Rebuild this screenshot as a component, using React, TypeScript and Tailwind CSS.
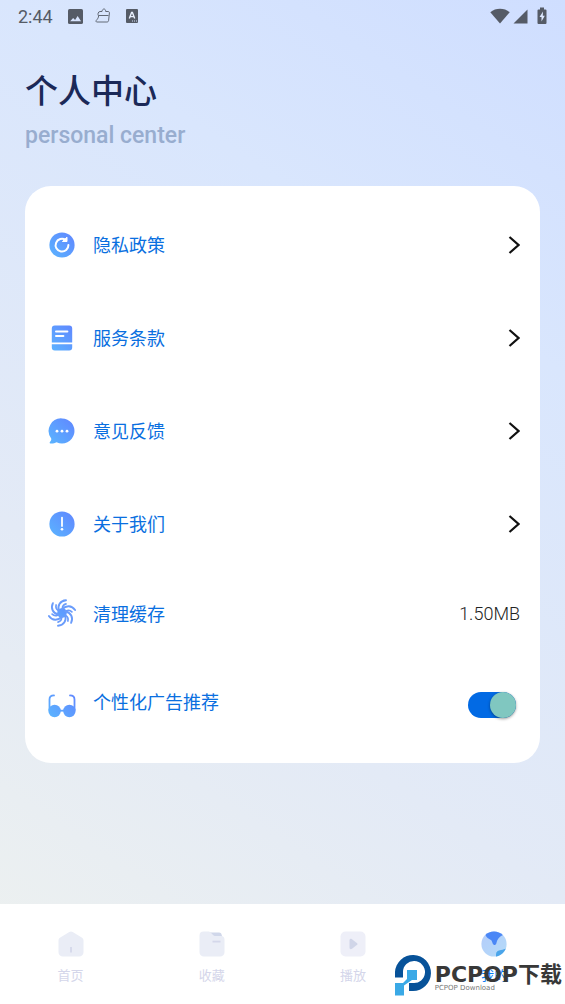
import React, { useState } from "react";

const menuItems = [
  { id: "privacy", name: "隐私政策", icon: <RefreshIcon /> },
  { id: "terms", name: "服务条款", icon: <BookIcon /> },
  { id: "feedback", name: "意见反馈", icon: <ChatIcon /> },
  { id: "about", name: "关于我们", icon: <InfoIcon /> },
];

const tabs = [
  { id: "home", name: "首页", icon: <HomeIcon /> },
  { id: "favorites", name: "收藏", icon: <FolderIcon /> },
  { id: "play", name: "播放", icon: <PlayIcon /> },
  { id: "mine", name: "我的", icon: <GlobeIcon /> },
];

function BlueGradient({ id }: { id: string }) {
  return (
    <defs>
      <linearGradient id={id} x1="0" y1="28" x2="28" y2="0" gradientUnits="userSpaceOnUse">
        <stop offset="0.1" stopColor="#5bb2ff" />
        <stop offset="0.9" stopColor="#6088ff" />
      </linearGradient>
    </defs>
  );
}

function RefreshIcon() {
  return (
    <svg className="size-7" viewBox="0 0 28 28" fill="none" aria-hidden="true">
      <BlueGradient id="refresh" />
      <circle cx="14" cy="14" r="12.6" fill="url(#refresh)" />
      <path d="M17.6 8.9A6.4 6.4 0 1 0 20.4 14" stroke="#fff" strokeWidth="2" strokeLinecap="round" />
      <path d="M19 6.2v4.3h-4.6Z" fill="#fff" stroke="#fff" strokeWidth="1" strokeLinejoin="round" />
    </svg>
  );
}

function BookIcon() {
  return (
    <svg className="size-7" viewBox="0 0 28 28" fill="none" aria-hidden="true">
      <BlueGradient id="book" />
      <path d="M6.8 1.5h14.4a3 3 0 0 1 3 3v14H3.8v-14a3 3 0 0 1 3-3Z" fill="url(#book)" />
      <path d="M3.8 20.3h20.4v3.2a3 3 0 0 1-3 3H6.8a3 3 0 0 1-3-3Z" fill="url(#book)" />
      <path d="M8 7.4h11.4M8 12h7.4" stroke="#fff" strokeWidth="2" strokeLinecap="round" />
    </svg>
  );
}

function ChatIcon() {
  return (
    <svg className="size-7" viewBox="0 0 28 28" aria-hidden="true">
      <BlueGradient id="chat" />
      <path
        d="M14 1.4A12.5 12.5 0 1 1 8.6 25.2c-1.8 1-4.2 1.4-6.2 1.2-.9-.1-1-1-.3-1.6 1-.9 1.4-2 1.1-3.4A12.5 12.5 0 0 1 14 1.4Z"
        fill="url(#chat)"
      />
      <g fill="#fff">
        <circle cx="9" cy="14.2" r="1.4" />
        <circle cx="14" cy="14.2" r="1.4" />
        <circle cx="19" cy="14.2" r="1.4" />
      </g>
    </svg>
  );
}

function InfoIcon() {
  return (
    <svg className="size-7" viewBox="0 0 28 28" aria-hidden="true">
      <BlueGradient id="info" />
      <circle cx="14" cy="14" r="12.6" fill="url(#info)" />
      <path d="M14 7.6V16" stroke="#fff" strokeWidth="1.8" strokeLinecap="round" />
      <circle cx="14" cy="19.3" r="1.3" fill="#fff" />
    </svg>
  );
}

function SwirlIcon() {
  const arms = [0, 60, 120, 180, 240, 300];
  return (
    <svg className="size-7" viewBox="0 0 28 28" fill="none" aria-hidden="true">
      <BlueGradient id="swirl" />
      <circle cx="14" cy="14" r="4.8" fill="url(#swirl)" />
      <g stroke="#6a9cfb" strokeLinecap="round">
        {arms.map((angle) => (
          <g key={angle} transform={`rotate(${angle} 14 14)`}>
            <path d="M10.8 12C9.3 6.600 12 1.600 18 1.200" strokeWidth="1.900" />
            <path d="M14.400 9.500C14.400 7.300 15.600 5.600 18 4.900" strokeWidth="1.700" />
          </g>
        ))}
      </g>
    </svg>
  );
}

function GlassesIcon() {
  return (
    <svg className="size-7" viewBox="0 0 28 28" fill="none" aria-hidden="true">
      <BlueGradient id="glasses" />
      <g fill="url(#glasses)">
        <circle cx="6.6" cy="20" r="6.2" />
        <circle cx="21.4" cy="20" r="6.2" />
        <rect x="11" y="18.8" width="6" height="1.8" />
      </g>
      <path
        d="M1.5 19V8.6C1.5 5.8 3 4.4 6 4.4M26.5 19V8.6c0-2.8-1.5-4.2-4.5-4.2"
        stroke="url(#glasses)"
        strokeWidth="1.8"
        strokeLinecap="round"
      />
    </svg>
  );
}

function HomeIcon() {
  return (
    <svg className="size-7" viewBox="0 0 28 28" aria-hidden="true">
      <path
        d="M12.3 2c1-.7 2.4-.7 3.4 0l9 5.6c1.1.7 1.8 1.8 1.8 3v11.6a4.3 4.3 0 0 1-4.3 4.3H5.8a4.3 4.3 0 0 1-4.3-4.3V10.6c0-1.2.7-2.3 1.8-3Z"
        fill="#eaedf6"
      />
      <path d="M14 17v5.5" stroke="#d4d7ea" strokeWidth="1.8" />
    </svg>
  );
}

function FolderIcon() {
  return (
    <svg className="size-7" viewBox="0 0 28 28" aria-hidden="true">
      <path d="M11 2.5h10c1.800 0 2.600 1 3 3.500l.5 2-8-1Z" fill="#d0d7ea" />
      <path
        d="M5.5 1.5H10c1.600 0 2.400.5 3.400 1.700l1.700 1.900c.7.7 1.300 1 2.400 1H23a3.500 3.500 0 0 1 3.500 3.500v12.600a4.300 4.300 0 0 1-4.300 4.300H5.800a4.300 4.300 0 0 1-4.300-4.300V5.500a4 4 0 0 1 4-4Z"
        fill="#eaedf6"
      />
      <path d="M14.5 11.600h8" stroke="#d4d7ea" strokeWidth="1.8" />
    </svg>
  );
}

function PlayIcon() {
  return (
    <svg className="size-7" viewBox="0 0 28 28" aria-hidden="true">
      <rect x="1.5" y="1.5" width="25" height="25" rx="5" fill="#eeeff8" />
      <path d="M10.5 10.5c0-1.600 1.200-2.200 2.500-1.300l4.800 3.700c.9.700.9 1.500 0 2.200L13 18.800c-1.300.9-2.500.3-2.500-1.300Z" fill="#d0d5e8" />
    </svg>
  );
}

function GlobeIcon() {
  return (
    <svg className="size-7" viewBox="0 0 28 28" aria-hidden="true">
      <defs>
        <linearGradient id="globe" x1="0" y1="0" x2="1" y2="1">
          <stop offset="0" stopColor="#b4cbfb" />
          <stop offset="1" stopColor="#b4dcf8" />
        </linearGradient>
        <clipPath id="globe-clip">
          <circle cx="14" cy="14" r="12.6" />
        </clipPath>
      </defs>
      <g clipPath="url(#globe-clip)">
        <rect width="28" height="28" fill="url(#globe)" />
        <path
          d="M5.5 4.5 8 0h13l2 5c-2.200 1-3.400 2-4.600 3.600-1 1.400-1.600 2.600-1.900 4.200-.4 2.600-2.800 2.900-3.800.7-.6-1.500-.6-2.300-1.400-3.200C9.800 8.900 7.800 8.900 6.600 7 6 6 5.600 5.300 5.500 4.500Z"
          fill="#4b87f6"
        />
        <path d="M28 18.500c-3 .2-4.500 1.300-7 1.500-3 .3-5 1.800-5 4.200V28h12Z" fill="#4aa5ea" />
      </g>
    </svg>
  );
}

const StatusBar = () => (
  <div className="flex h-8 items-center justify-between px-[18px] text-[#555b66]">
    <div className="flex items-center">
      <span className="w-[50px] text-[18px]">2:44</span>
      <svg className="size-[15px]" viewBox="0 0 14 14" aria-hidden="true">
        <rect width="14" height="14" rx="1.5" fill="currentColor" />
        <path d="m2 11.500 2.800-3.200 1.800 1.900 2.400-3.600 3.200 4.900Z" fill="#d8e4fd" />
      </svg>
      <svg className="ml-3 size-4" viewBox="0 0 16 16" fill="none" stroke="currentColor" strokeWidth="0.9" aria-hidden="true">
        <path d="M5 3.500h2c.2-1.500.9-2.500 2-2.500s1.700 1 1.700 2.500h2.300c1 0 1.500.5 1.400 1.500l-.8 7.500c-.1 1-.7 1.500-1.700 1.500H2c-1 0-1.400-.8-.8-1.500C2.800 10.800 3.500 9.500 3.600 8c-1.200-1.500-.5-4.500 1.400-4.500ZM4 7.500h9.500" />
      </svg>
      <svg className="ml-[14px] size-[14px]" viewBox="0 0 14 14" aria-hidden="true">
        <rect x="1" width="12" height="14" rx="1" fill="currentColor" />
        <path d="m4.300 9.500 2.300-6h.8l2.300 6M5.200 7.600h3.600" stroke="#e8effd" strokeWidth="1.4" fill="none" />
        <path d="M7 12h5" stroke="#d8e4fd" strokeDasharray="1 1" />
      </svg>
    </div>
    <div className="flex items-center">
      <svg className="h-4 w-5" viewBox="0 0 20 16" fill="currentColor" aria-hidden="true">
        <path d="M.3 4.200C5.800-.3 14.200-.3 19.700 4.200L10 15.500Z" />
      </svg>
      <svg className="ml-[3px] size-[15px]" viewBox="0 0 15 15" fill="currentColor" aria-hidden="true">
        <path d="M14.500.5v14H.5Z" />
      </svg>
      <svg className="ml-[9px] h-[18px] w-[10px]" viewBox="0 0 10 18" aria-hidden="true">
        <path d="M3 .5h4v2h1.500a1 1 0 0 1 1 1V16a1 1 0 0 1-1 1h-7a1 1 0 0 1-1-1V3.500a1 1 0 0 1 1-1H3Z" fill="currentColor" />
        <path d="M6 4.500 2.500 10h2v4.500L7.800 8.800h-2Z" fill="#dce7fe" />
      </svg>
    </div>
  </div>
);

const Watermark = () => (
  <div className="pointer-events-none absolute right-[3px] bottom-2 flex items-end gap-[3px]">
    <svg className="h-[42px] w-[38px]" viewBox="0 0 38 42" aria-hidden="true">
      <path d="M1 23.500V18a18 18 0 1 1 18 19h-4v-8h4a11 11 0 1 0-10-11v5.500Z" fill="#075299" />
      <path d="M13 16h10v10h-5l-8 5.500v10H1V29h8l4-4Z" fill="#3aa9e6" />
    </svg>
    <div className="flex flex-col pb-1 font-['DejaVu_Sans','Noto_Sans_CJK_SC',sans-serif] text-[#383838]">
      <span className="text-[22px] leading-5 font-bold whitespace-nowrap">PCPOP下载</span>
      <span className="text-[7px] leading-[7px] text-[#777777]">PCPOP Download</span>
    </div>
  </div>
);

export default function App() {
  const [personalized, setPersonalized] = useState(true);
  const [activeTab, setActiveTab] = useState("mine");

  return (
    <div
      lang="zh-CN"
      className="flex min-h-screen flex-col bg-[linear-gradient(214deg,#cfdeff_0%,#d9e6fd_27%,#e3eaf6_65%,#ecf0f0_94%)] font-[Roboto,'Noto_Sans_CJK_SC',sans-serif]"
    >
      <StatusBar />

      <main className="flex-1 px-[25px]">
        <header className="pt-[38px] font-medium">
          <h1 className="text-[33px] leading-[44px] text-[#1b2958]">个人中心</h1>
          <p className="mt-2 text-[23px] leading-7 text-[#98adcf]">personal center</p>
        </header>

        <section className="mt-9 rounded-[26px] bg-white pt-3 pr-5 pb-[17px] pl-[23px] text-[18px] text-[#0a6fe0]">
          {menuItems.map((item) => (
            <button key={item.id} type="button" className="flex h-[93px] w-full items-center text-left">
              {item.icon}
              <span className="ml-[17px] flex-1 pt-[2px]">{item.name}</span>
              <svg className="h-5 w-3" viewBox="0 0 12 20" fill="none" stroke="#111" strokeWidth="2.2" aria-hidden="true">
                <path d="m1.500 2 9 8-9 8" />
              </svg>
            </button>
          ))}
          <button type="button" className="flex h-[86px] w-full items-center text-left">
            <SwirlIcon />
            <span className="ml-[17px] flex-1 pt-[2px]">清理缓存</span>
            <span className="font-light text-[#222222]">1.50MB</span>
          </button>
          <label className="flex h-[90px] cursor-pointer items-center pt-2 pr-1">
            <GlassesIcon />
            <span className="ml-[17px] flex-1 pb-[6px]">个性化广告推荐</span>
            <span className="relative flex">
              <input
                type="checkbox"
                role="switch"
                className="peer h-[26px] w-[48px] cursor-pointer appearance-none rounded-full bg-gray-300 checked:bg-[#026ae4]"
                checked={personalized}
                onChange={(e) => setPersonalized(e.target.checked)}
              />
              <span className="pointer-events-none absolute top-0 left-0 size-[26px] rounded-full bg-[#80c7c0] shadow-[0_1px_3px_rgba(0,0,0,0.4)] peer-checked:translate-x-[22px]" />
            </span>
          </label>
        </section>
      </main>

      <nav className="relative grid h-[100px] grid-cols-4 bg-white">
        {tabs.map((tab) => (
          <button
            key={tab.id}
            type="button"
            className={`flex flex-col items-center pt-[26px] text-[13px] leading-5 ${
              activeTab === tab.id ? "text-[#0a7cf5]" : "text-[#d4d6ea]"
            }`}
            onClick={() => setActiveTab(tab.id)}
          >
            {tab.icon}
            <span className="mt-2">{tab.name}</span>
          </button>
        ))}
        <Watermark />
      </nav>
    </div>
  );
}
